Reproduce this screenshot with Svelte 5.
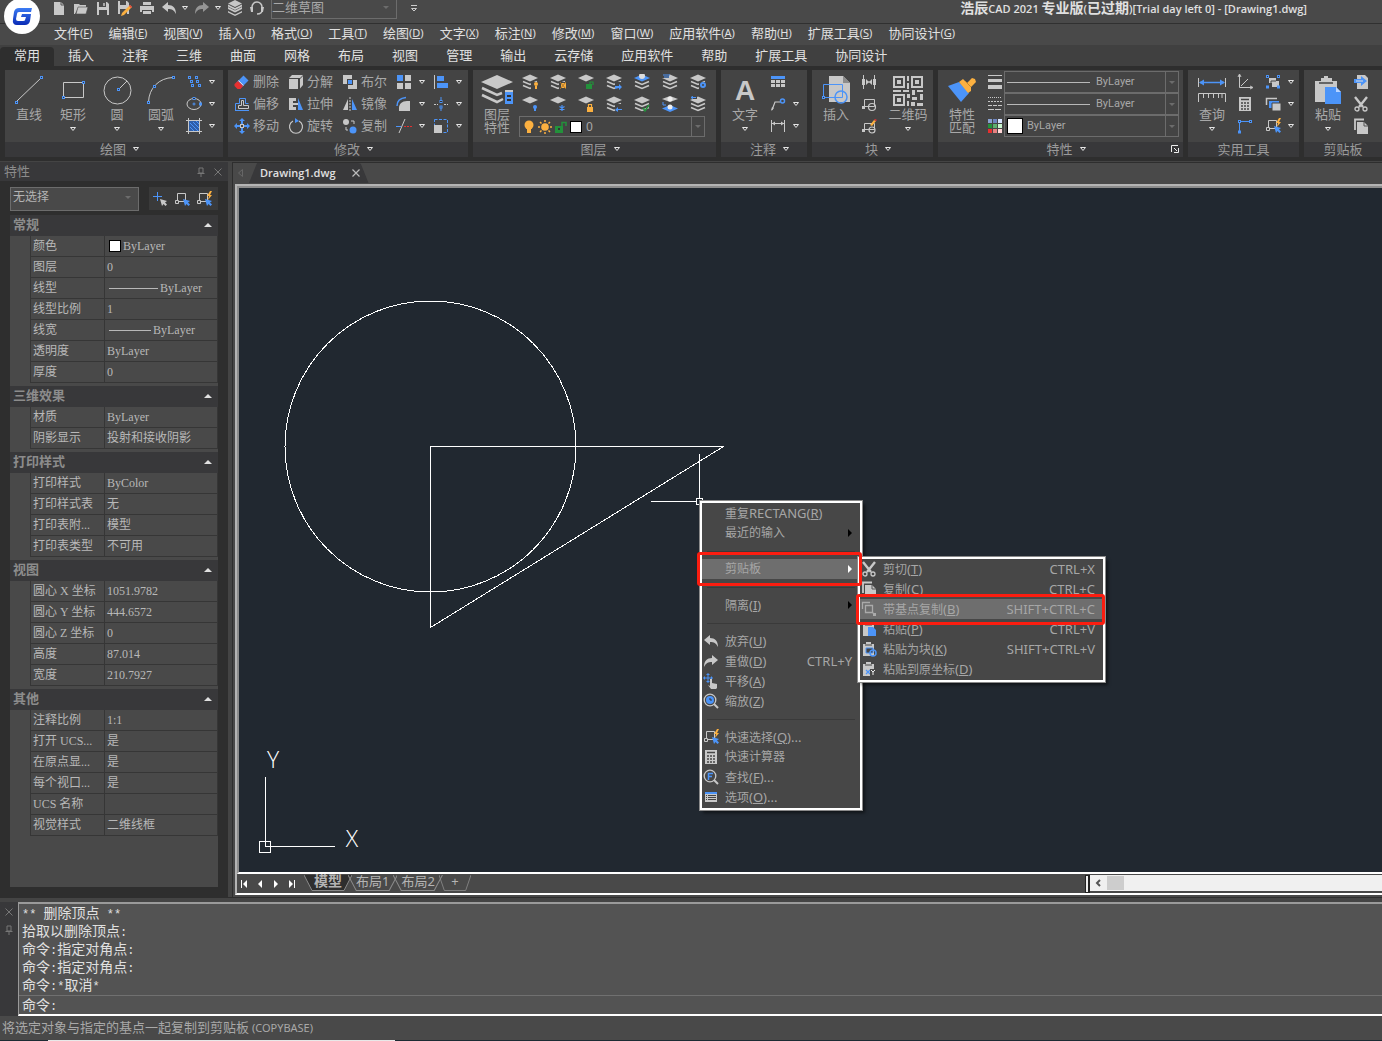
<script lang="ts">
  type Value = { label: string; value: string; swatch?: boolean; line?: number }

  const G = '#c8c8c8'
  const B = '#4c94f8'
  const O = '#fbb040'

  // square grip used on most of the drawing icons
  const grip = (x: number, y: number) =>
    `<rect x="${x - 1}" y="${y - 1}" width="2" height="2" fill="#333" stroke="${B}"/>`

  const layers = (badge = '', top = G) =>
    `<path d="M8 .5l8 3.5-8 3.5L0 4z" fill="${top}"/><path d="M1 7.5l7 3 7-3M1 11.5l7 3 7-3" fill="none" stroke="${G}" stroke-width="1.6"/>${badge}`
  const layerTop = (badge: string) => `<path d="M8 .5l8 3.5-8 3.5L0 4z" fill="${G}"/>${badge}`
  const clear = '<rect x="9" y="8" width="7" height="8" fill="#444"/>'
  const cursor = (x: number, y: number, c: string) =>
    `<path d="M${x} ${y}l7 2-2 1.500 2 2-1.500 1.500-2-2-1.500 2z" fill="${c}"/>`
  const board = `<path d="M2 3h3V1h5v2h3v12H2z" fill="${G}"/><path d="M4 4h7" stroke="#444"/>`

  const icons: Record<string, string> = {
    new: `<path d="M3 2h7l3 3v10H3z" fill="${G}"/><path d="M10 2v3h3" fill="none" stroke="#555"/>`,
    open: `<path d="M1 4h5l1 1h6v3H5l-3 6H1z" fill="${G}"/><path d="M5 7h10l-2 7H3z" fill="${G}" stroke="#494949" stroke-width=".6"/>`,
    save: `<path d="M2 2h10l2 2v11H2z" fill="${G}"/><path d="M4 2v5h7V2M4 15v-5h8v5z" fill="#494949"/><path d="M9 3v3" stroke="${G}" stroke-width="1.500"/>`,
    saveas: `<path d="M1 1h9l2 2v11H1z" fill="${G}"/><path d="M3 1v4h6V1M3 14V9h7v5z" fill="#494949"/><path d="M13 5l2 2-8 8-3 1 1-3z" fill="${O}"/><path d="M13 5l2 2-1 1-2-2z" fill="#e64040"/>`,
    print: `<path d="M4 2h8v3H4zM1 6h14v6h-2v-2H3v2H1zM4 11h8v3H4z" fill="${G}"/>`,
    undo: `<path d="M1 7l6-5v3c5 0 8 3 8 9-2-4-4-5-8-5v3z" fill="${G}"/>`,
    redo: `<path d="M15 7L9 2v3c-5 0-8 3-8 9 2-4 4-5 8-5v3z" fill="${G}"/>`,
    stack: `<path d="M8 0l7 3.500-7 3.500-7-3.500zM1 7l7 3.500L15 7v2l-7 3.500L1 9zM1 11l7 3.500 7-3.500v1.500L8 16l-7-3.500z" fill="${G}"/><path d="M1 4.500v2l7 3.500 7-3.500v-2L8 8z" fill="${G}"/>`,
    headset: `<path d="M3 10V7a5 5 0 0 1 10 0v3c0 3-2 4-5 4" fill="none" stroke="${G}" stroke-width="1.500"/><path d="M1 7h3v5H2zM12 7h3l-1 5h-2z" fill="${G}"/>`,
    line: `<path d="M4 27L28 4" stroke="${G}"/>${grip(3.5, 28.5)}${grip(28.5, 3.5)}`,
    rect: `<path d="M6.500 8.500h20v15h-20z" fill="none" stroke="${G}"/>${grip(26.5, 8.5)}${grip(6.5, 23.5)}`,
    circle: `<circle cx="16.500" cy="16.500" r="13.500" fill="none" stroke="${G}"/><path d="M18 15l8-8" stroke="${G}"/>${grip(17.5, 15.5)}`,
    arc: `<path d="M3.500 28C4 14 14 4 28 3.500" fill="none" stroke="${G}"/>${grip(3.5, 28.5)}${grip(9.5, 12.5)}${grip(28.5, 3.5)}`,
    points: [[3.5, 3.5], [10.5, 3.5], [5.5, 7.5], [11.5, 7.5], [6.5, 11.5], [13.5, 11.5]]
      .map(([x, y]) => `<rect x="${x - 1}" y="${y - 1}" width="2" height="2" fill="none" stroke="${B}"/>`).join(''),
    ellipse: `<ellipse cx="8" cy="8" rx="7" ry="5.500" fill="none" stroke="${G}"/><path d="M8 6.500v3M6.500 8h3" stroke="${B}"/>${grip(8, 2.5)}${grip(14.5, 8)}`,
    hatch: `<rect x="3" y="3" width="10" height="10" fill="#2f5ea8"/><path d="M4 9l4 4M4 5l8 8M7 4l6 6M10 3l3 3" stroke="${B}"/><path d="M2.500 0v16M13.500 0v16M0 2.500h16M0 13.500h16" stroke="${G}"/>`,
    erase: `<path d="M9.500 1.500l5 5-7 7-5-5z" fill="${B}"/><path d="M4 7l5 5-2.500 3h-3L.5 12v-2z" fill="#e63030"/><path d="M4.500 6.500l5 5" stroke="#ddd"/>`,
    explode: `<path d="M1 5h9v10H1zM1 4l3-3h11l-3 3zM12 5l3-3v9l-3 3.500z" fill="${G}"/>`,
    bool: `<path d="M1 1h9v9H1zM6 6h9v9H6z" fill="${G}"/><rect x="5" y="5" width="6" height="6" fill="#444"/><rect x="6" y="6" width="4" height="4" fill="${B}"/>`,
    array: `<path d="M9 1h6v6H9zM1 9h6v6H1zM9 9h6v6H9z" fill="${G}"/><path d="M1 1h6v6H1z" fill="${B}"/>`,
    align: `<path d="M1.500 1v14" stroke="${G}"/><path d="M4 2h7v5H4zM4 9h11v5H4z" fill="${B}"/>`,
    offset: `<path d="M1.500 14.500v-7h4v-5h6v5h3" fill="none" stroke="${B}"/><path d="M1 14.500h14" stroke="${B}"/><path d="M4.500 12.500v-3h3v-5h2v5h5v3z" fill="none" stroke="${G}"/>`,
    stretch: `<path d="M1 2h7v3H5v6h3v3H1z" fill="${G}"/><path d="M10 2l5 12h-5z" fill="${B}"/><path d="M5 8h5" stroke="${G}" stroke-width="2"/>`,
    mirror: `<path d="M6 3v11H1z" fill="${G}"/><path d="M10 3v11h5z" fill="${B}"/><path d="M8 1v15" stroke="${G}" stroke-dasharray="2 1"/>`,
    fillet: `<path d="M3 15V12c0-4 3-7 8-7h3v10z" fill="${G}"/><path d="M1 10c0-5 3-8 9-8.500" fill="none" stroke="${B}" stroke-width="1.500"/>`,
    break: `<path d="M8 1v4M8 11v4" stroke="${B}"/><path d="M1 8.500h4M11 8.500h4" stroke="${G}" stroke-dasharray="2 1"/>${grip(8, 5.5)}${grip(8, 11)}`,
    move: `<path d="M8 0l3 3H9v4h4V5l3 3-3 3V9H9v4h2l-3 3-3-3h2V9H3v2L0 8l3-3v2h4V3H5z" fill="${B}"/><rect x="6.500" y="6.500" width="3" height="3" fill="#444" stroke="${G}"/>`,
    rotate: `<path d="M5 3a6.500 6.500 0 1 0 6 0" fill="none" stroke="${G}" stroke-width="1.200"/><path d="M7 0l4 3-4 2z" fill="${B}"/>`,
    copy: `<circle cx="4" cy="4" r="3" fill="${G}"/><circle cx="11" cy="12" r="3.500" fill="${B}"/><path d="M9 3h3v3M4 9v3h2" fill="none" stroke="${G}"/>`,
    trim: `<path d="M3 15L9 1" stroke="${G}"/><path d="M0 8.500h5" stroke="${B}"/><path d="M8 8.500h8" stroke="#e63030" stroke-dasharray="2 1"/>`,
    scale: `<path d="M1.500 1.500h13v13h-13z" fill="none" stroke="${B}" stroke-dasharray="3 1.500"/><rect x="1" y="7" width="8" height="8" fill="${G}"/>`,
    layerprops: `<path d="M16 1l16 7-16 7L0 8z" fill="${G}"/><path d="M1 14l15 7 5-2M1 21l15 7 6-3" fill="none" stroke="${G}" stroke-width="2.500"/><path d="M24 17h8v13h-8z" fill="${B}"/><path d="M24 17h8" stroke="${G}" stroke-width="2"/><path d="M26 21h4v2h-4zM26 25h4v2h-4z" fill="#333"/>`,
    layoff: layers(`${clear}<circle cx="14" cy="10" r="2" fill="${O}"/><path d="M13 12h2v3h-2z" fill="${O}"/>`),
    layfreeze: layers(`${clear}<rect x="11" y="9" width="5" height="5" fill="${O}"/><path d="M10 8l6 7M16 8l-6 7" stroke="#a9752c"/>`),
    layunlock: layerTop(`<path d="M8 10h6v5H8z" fill="#23913b"/><path d="M12 10V8h3v3" fill="none" stroke="#23913b" stroke-width="1.200"/>`),
    laynext: layers(`${clear}<path d="M9 15v-3h4v-2l3 3-3 3v-2" fill="${B}"/>`),
    laycur: layers('<circle cx="8" cy="2" r="3" fill="#ddd"/>', B),
    laymatch: layers(`<path d="M0 0h7v4H0z" fill="#444"/><path d="M1 1h7M2 3h5" stroke="${B}"/>`),
    layset: layers(`${clear}<circle cx="13" cy="11" r="2" fill="#444" stroke="${B}" stroke-width="2"/>`),
    layon: layerTop(`<circle cx="13" cy="11" r="2" fill="${B}"/><path d="M12 12h2v3h-2z" fill="${B}"/>`),
    laythaw: layerTop(`<path d="M12 9v6M9.500 10.500l5 3M14.500 10.500l-5 3" stroke="${B}" stroke-width="1.200"/>`),
    laylock: layerTop(`<path d="M9 11h6v5H9z" fill="${O}"/><path d="M10.500 11V8.500h3V11" fill="none" stroke="${O}" stroke-width="1.200"/>`),
    layprev: layers(`${clear}<path d="M16 10v3h-4v-2l-3 3 3 2v-2h4" fill="${B}"/>`),
    laycheck: layers('<path d="M9 12l2 3 4-6" fill="none" stroke="#23913b" stroke-width="1.500"/>'),
    laywalk: `<path d="M8 0l8 3-8 3-8-3z" fill="${G}"/><path d="M8 9l8 3.500-8 3.500-8-3.500z" fill="${B}"/><circle cx="8" cy="3" r="2.500" fill="#eee"/><circle cx="8" cy="11" r="2.500" fill="#eee"/><path d="M1 6v3h3" stroke="${B}" fill="none"/>`,
    layback: layers(`<rect width="7" height="3" fill="#444"/><path d="M6 1.500H1M3 0L1 1.500 3 3" fill="none" stroke="${B}"/>`),
    bulb: `<circle cx="8" cy="6" r="4.500" fill="${O}"/><path d="M6 10h4v4H6z" fill="${O}"/>`,
    sun: `<circle cx="8" cy="8" r="3.800" fill="${O}"/><path d="M8 1v2M8 13v2M1 8h2M13 8h2M3 3l1.500 1.500M11.500 11.500L13 13M13 3l-1.500 1.500M4.500 11.500L3 13" stroke="${O}" stroke-width="1.500"/>`,
    unlock: `<path d="M2 7h8v7H2z" fill="#23913b"/><path d="M9 7V3.500h4V7" fill="none" stroke="#23913b" stroke-width="1.500"/><path d="M5 10h2" stroke="#333" stroke-width="2"/>`,
    text: `<text x="16" y="26" text-anchor="middle" font-family="Liberation Sans" font-weight="bold" font-size="28" fill="${G}">A</text>`,
    table: `<path d="M1 2h14v3H1z" fill="${B}"/><path d="M1 6h4v3H1zM6 6h4v3H6zM11 6h4v3h-4zM1 10h4v3H1zM6 10h4v3H6zM11 10h4v3h-4z" fill="${G}"/>`,
    leader: `<path d="M2 14l3-8h5" fill="none" stroke="${G}" stroke-width="1.200"/><path d="M1 15l1-4 2 1z" fill="${G}"/><circle cx="12.500" cy="5" r="2" fill="none" stroke="${B}" stroke-width="1.500"/>`,
    dim: `<path d="M1.500 2v12M14.500 2v12M2 5.500h12" stroke="${G}"/><path d="M2 5.500l3-2v4zM14 5.500l-3-2v4z" fill="${G}"/>`,
    insert: `<path d="M9 2h14l7 7v19H9z" fill="${G}"/><path d="M23 2v7h7" fill="#8c8c8c"/><path d="M3.500 10.500h19v13h-19z" fill="none" stroke="${B}"/><circle cx="21" cy="23" r="6" fill="none" stroke="${B}" stroke-width="1.500"/>${grip(3.5, 23.5)}`,
    editblk: `<path d="M2.500 1v14M13.500 1v14M5 8h6" stroke="${G}"/><path d="M1 5h3v6H1zM12 5h3v6h-3zM5 5l3 3-3 3zM11 5L8 8l3 3z" fill="${G}"/>`,
    block: `<path d="M3.500 3.500h10v7h-10z" fill="none" stroke="${G}"/><circle cx="11" cy="11" r="3.500" fill="none" stroke="${G}" stroke-width="1.200"/><path d="M1 10h3v3H1z" fill="${G}"/>`,
    blockedit: `<path d="M3.500 5.500h10v6h-10z" fill="none" stroke="${G}"/><circle cx="11" cy="12" r="3" fill="none" stroke="${G}" stroke-width="1.200"/><path d="M1 11h3v3H1z" fill="${G}"/><path d="M9 7l4-5 2 1-4 5z" fill="${O}"/><path d="M13 2l1-1 2 1-1 1z" fill="#e63030"/>`,
    qr: `<path d="M2 3h10v10H2zM20 3h10v10H20zM2 21h10v10H2z" fill="none" stroke="${G}" stroke-width="2"/><path d="M5 6h4v4H5zM23 6h4v4h-4zM5 24h4v4H5zM15 2h2v5h-2zM15 9h2v6h-2zM1 16h8v2H1zM11 16h6v2h-6zM20 16h3v5h-3zM25 16h6v2h-6zM15 20h3v4h-3zM15 27h2v5h-2zM20 23h5v3h-5zM19 28h4v4h-4zM25 29h6v3h-6zM28 20h3v6h-3z" fill="${G}"/>`,
    match: `<path d="M2 12l11-4 10 11-8 9z" fill="${B}"/><path d="M13 8l4-3 4 4 5-5 3 1 1 3-5 5v4l-3 2z" fill="${O}"/><path d="M19 7l6 6" stroke="#c98828"/>`,
    lweight: `<path d="M1 1.500h14" stroke="${G}"/><path d="M1 6.500h14" stroke="${G}" stroke-width="3"/><path d="M1 13h14" stroke="${G}" stroke-width="4"/>`,
    ltype: `<path d="M1 1.500h14" stroke="${G}" stroke-dasharray="1 1"/><path d="M1 5.500h14" stroke="${G}" stroke-dasharray="2 1"/><path d="M1 9.500h14" stroke="${G}" stroke-dasharray="4 1"/><path d="M1 13.500h14" stroke="${G}" stroke-dasharray="6 1"/>`,
    colors: `<path d="M1 1h4v4H1z" fill="#8aa2d2"/><path d="M6 1h4v4H6z" fill="#6d83bd"/><path d="M11 1h4v4h-4z" fill="#d6e2ff"/><path d="M1 6h4v4H1z" fill="#23913b"/><path d="M6 6h4v4H6z" fill="#5fae6d"/><path d="M11 6h4v4h-4z" fill="#c8f5ce"/><path d="M1 11h4v4H1z" fill="#e63030"/><path d="M6 11h4v4H6z" fill="#e68080"/><path d="M11 11h4v4h-4z" fill="#ffd6d6"/>`,
    measure: `<path d="M2.500 4v9M29.500 4v9" stroke="${G}"/><path d="M4 8.500h24" stroke="${B}" stroke-width="1.500"/><path d="M3 8.500l5-3v6zM29 8.500l-5-3v6z" fill="${B}"/><path d="M2.500 28v-8.500h27V28M7.500 20v4M12.500 20v4M17.500 20v4M22.500 20v4M26 20v4" fill="none" stroke="${G}"/>`,
    ucs: `<path d="M2.500 1v12.500H15M4 12l7-7" fill="none" stroke="${G}"/><path d="M1 3l1.500-3L4 3M13 12l3 1.500-3 1.500" fill="none" stroke="${G}"/>`,
    calc: `<path d="M2 1h12v14H2z" fill="${G}"/><path d="M4 3.500h8M4 7h2M7 7h2M10 7h2M4 10h2M7 10h2M10 10h2M4 13h2M7 13h2M10 13h2" stroke="#444" stroke-width="1.600"/>`,
    ortho: `<path d="M2.500 14V3.500H14" fill="none" stroke="${B}"/>${grip(2.5, 3.5)}${grip(13.5, 3.5)}${grip(2.5, 14)}`,
    group: `<path d="M4 4h7v5H4zM7 7h7v6H7z" fill="${G}"/><path d="M6 9V7h5" stroke="#444" fill="none"/>${grip(2.5, 2.5)}${grip(13.5, 2.5)}${grip(2.5, 13)}${grip(13.5, 13)}`,
    order: `<path d="M1.500 9V2.500H12" fill="none" stroke="${G}" stroke-width="1.500"/><path d="M4 5h10v7H4z" fill="${B}"/><path d="M7 7h9v8H7z" fill="${G}" stroke="#444"/>`,
    qselect: `<path d="M3.500 2.500h8v8h-8z" fill="none" stroke="${G}"/><path d="M1.500 9.500h3v3h-3z" fill="#444" stroke="${G}"/><path d="M14 0l-3 5h2l-1 4 4-5h-2l2-4z" fill="${O}"/>${cursor(9, 8, B)}`,
    select: `<path d="M3.500 2.500h8v8h-8z" fill="none" stroke="${G}"/><path d="M1.500 9.500h3v3h-3z" fill="#444" stroke="${G}"/>${cursor(9, 8, B)}`,
    pick: `<path d="M5.500 1v9M1 5.500h9" stroke="${B}"/>${cursor(8, 8, G)}`,
    paste: `<path d="M3 7h6V4h3V2h4v2h4v3h5v21H3z" fill="${G}"/><path d="M7 9h14" stroke="#444" stroke-width="1.500"/><path d="M13 13h11l5 5v12H13z" fill="${B}"/><path d="M24 13v5h5" fill="#b9d4ff"/>`,
    export: `<path d="M4 1h8l3 3v11H4z" fill="${G}"/><path d="M1 5h7V2l6 5-6 5V9H1z" fill="${B}"/><path d="M3 7h7" stroke="#ddd"/>`,
    cut: `<path d="M2 1l8 10M14 1L6 11" stroke="${G}" stroke-width="2.400"/><circle cx="4" cy="13" r="2" fill="none" stroke="${G}" stroke-width="1.300"/><circle cx="12" cy="13" r="2" fill="none" stroke="${G}" stroke-width="1.300"/>`,
    copydoc: `<path d="M2 12V1.500h9" fill="none" stroke="${G}" stroke-width="1.800"/><path d="M4 4h7l4 4v8H4z" fill="${G}"/><path d="M11 4v4h4" fill="none" stroke="#555"/>`,
    copybase: `<path d="M1.500 8V1.500H9M4.500 4.500h7v7h-7zM11 11l3 3" fill="none" stroke="#aaa" stroke-width="1.300"/><path d="M12 12h3v3h-3z" fill="#aaa"/>`,
    pastes: `${board}<path d="M7 6h5l3 3v6H7z" fill="${B}"/>`,
    pasteblk: `${board}<path d="M5 7h7v5H5z" fill="#444" stroke="${B}"/><circle cx="12" cy="12" r="3" fill="none" stroke="${B}" stroke-width="1.500"/>`,
    pasteorig: `${board}<path d="M5 9l4 4M9 9l-4 4" stroke="${B}" stroke-width="1.300"/><path d="M9 8h7v7H9z" fill="#474747"/><path d="M10 9l2 2 2-2M12 11v3" stroke="#eee" fill="none"/>`,
    pan: `<path d="M5 0l2 2H3zM5 10L3 8h4zM0 5l2-2v4zM10 5L8 3v4z" fill="${B}"/><path d="M5 1v8M1 5h8" stroke="${B}"/><path d="M7 6h2v4l5 1v4l-1 1H8l-3-4 2 1z" fill="${G}"/>`,
    zoom: `<circle cx="7" cy="7" r="5.800" fill="none" stroke="${G}" stroke-width="1.300"/><circle cx="7" cy="7" r="4" fill="${B}"/><path d="M7 5v2h2" fill="none" stroke="#333"/><path d="M11 11l4 4" stroke="${G}" stroke-width="2"/>`,
    find: `<circle cx="7" cy="7" r="5.800" fill="none" stroke="${G}" stroke-width="1.300"/><path d="M5.500 11V4.500H10M5.500 7.500H9" fill="none" stroke="${B}" stroke-width="1.500"/><path d="M11 11l4 4" stroke="${G}" stroke-width="2"/>`,
    options: `<path d="M2 3h12v10H2z" fill="${G}"/><path d="M2 4h12" stroke="${B}" stroke-width="2"/><path d="M3 6.500h1M5 6.500h8M3 8.500h1M5 8.500h8M3 10.500h1M5 10.500h8" stroke="#444"/>`
  }

  const menus = [
    ['文件', 'F'], ['编辑', 'E'], ['视图', 'V'], ['插入', 'I'], ['格式', 'O'], ['工具', 'T'], ['绘图', 'D'], ['文字', 'X'],
    ['标注', 'N'], ['修改', 'M'], ['窗口', 'W'], ['应用软件', 'A'], ['帮助', 'H'], ['扩展工具', 'S'], ['协同设计', 'G']
  ]

  const tabs = ['常用', '插入', '注释', '三维', '曲面', '网格', '布局', '视图', '管理', '输出', '云存储', '应用软件', '帮助', '扩展工具', '协同设计']

  const layerTools = [
    ['layoff', 'layfreeze', 'layunlock', 'laynext', 'laycur', 'laymatch', 'layset'],
    ['layon', 'laythaw', 'laylock', 'layprev', 'laycheck', 'laywalk', 'layback']
  ]

  const sections: { title: string; rows: Value[] }[] = [
    {
      title: '常规',
      rows: [
        { label: '颜色', value: 'ByLayer', swatch: true },
        { label: '图层', value: '0' },
        { label: '线型', value: 'ByLayer', line: 49 },
        { label: '线型比例', value: '1' },
        { label: '线宽', value: 'ByLayer', line: 42 },
        { label: '透明度', value: 'ByLayer' },
        { label: '厚度', value: '0' }
      ]
    },
    {
      title: '三维效果',
      rows: [
        { label: '材质', value: 'ByLayer' },
        { label: '阴影显示', value: '投射和接收阴影' }
      ]
    },
    {
      title: '打印样式',
      rows: [
        { label: '打印样式', value: 'ByColor' },
        { label: '打印样式表', value: '无' },
        { label: '打印表附...', value: '模型' },
        { label: '打印表类型', value: '不可用' }
      ]
    },
    {
      title: '视图',
      rows: [
        { label: '圆心 X 坐标', value: '1051.9782' },
        { label: '圆心 Y 坐标', value: '444.6572' },
        { label: '圆心 Z 坐标', value: '0' },
        { label: '高度', value: '87.014' },
        { label: '宽度', value: '210.7927' }
      ]
    },
    {
      title: '其他',
      rows: [
        { label: '注释比例', value: '1:1' },
        { label: '打开 UCS...', value: '是' },
        { label: '在原点显...', value: '是' },
        { label: '每个视口...', value: '是' },
        { label: 'UCS 名称', value: '' },
        { label: '视觉样式', value: '二维线框' }
      ]
    }
  ]

  type Item = { text?: string; key?: string; tail?: string; icon?: string; shortcut?: string; sub?: boolean; active?: boolean; sep?: boolean }

  const contextMenu: Item[] = [
    { text: '重复RECTANG', key: 'R' },
    { text: '最近的输入', sub: true },
    { sep: true },
    { text: '剪贴板', sub: true, active: true },
    { sep: true },
    { text: '隔离', key: 'I', sub: true },
    { sep: true },
    { text: '放弃', key: 'U', icon: 'undo' },
    { text: '重做', key: 'D', icon: 'redo', shortcut: 'CTRL+Y' },
    { text: '平移', key: 'A', icon: 'pan' },
    { text: '缩放', key: 'Z', icon: 'zoom' },
    { sep: true },
    { text: '快速选择', key: 'Q', tail: '...', icon: 'qselect' },
    { text: '快速计算器', icon: 'calc' },
    { text: '查找', key: 'F', tail: '...', icon: 'find' },
    { text: '选项', key: 'O', tail: '...', icon: 'options' }
  ]

  const clipboardMenu: Item[] = [
    { text: '剪切', key: 'T', icon: 'cut', shortcut: 'CTRL+X' },
    { text: '复制', key: 'C', icon: 'copydoc', shortcut: 'CTRL+C' },
    { text: '带基点复制', key: 'B', icon: 'copybase', shortcut: 'SHIFT+CTRL+C', active: true },
    { text: '粘贴', key: 'P', icon: 'pastes', shortcut: 'CTRL+V' },
    { text: '粘贴为块', key: 'K', icon: 'pasteblk', shortcut: 'SHIFT+CTRL+V' },
    { text: '粘贴到原坐标', key: 'D', icon: 'pasteorig' }
  ]

  const history = ['** 删除顶点 **', '拾取以删除顶点:', '命令:指定对角点:', '命令:指定对角点:', '命令:*取消*']

  // split into CJK and latin runs, the two are set in different sizes
  const runs = (text: string) => text.split(/([\x20-\x7e]+)/).filter(Boolean)
  const isLatin = (run: string) => run.charCodeAt(0) < 127

  let activeTab = $state('常用')
  let command = $state('')
</script>

{#snippet icon(name: string, size = 16)}
  <svg class={size > 16 ? 'icon-lg' : 'icon'} viewBox="0 0 {size} {size}" aria-hidden="true">{@html icons[name]}</svg>
{/snippet}

{#snippet chev()}
  <svg class="chev" viewBox="0 0 8 6" aria-hidden="true"><path d="M1.500 1.500h5L4 4.500z" fill="none" stroke="#e6e6e6" /></svg>
{/snippet}

{#snippet mixed(text: string)}
  {#each runs(text) as run}<span class:latin={isLatin(run)}>{run}</span>{/each}
{/snippet}

{#snippet big(name: string, label: string, drop = false)}
  <button class="big">
    {@render icon(name, 32)}
    <span>{label}</span>
    {#if drop}{@render chev()}{/if}
  </button>
{/snippet}

{#snippet small(name: string, label = '', drop = false)}
  <button class="small" aria-label={label || name}>
    {@render icon(name)}
    {#if label}<span>{label}</span>{/if}
    {#if drop}{@render chev()}{/if}
  </button>
{/snippet}

{#snippet menuItems(items: Item[])}
  {#each items as item}
    {#if item.sep}
      <li class="sep" role="separator"></li>
    {:else}
      <li role="none">
        <button class="item" class:active={item.active} role="menuitem">
          <span class="item-icon">{#if item.icon}{@render icon(item.icon)}{/if}</span>
          <span class="item-text">{@render mixed(item.text ?? '')}{#if item.key}<span class="latin">(<u>{item.key}</u>){item.tail ?? ''}</span>{/if}</span>
          {#if item.shortcut}<span class="latin">{item.shortcut}</span>{/if}
          {#if item.sub}<svg class="arrow" viewBox="0 0 4 8" aria-hidden="true"><path d="M0 0l4 4-4 4z" fill="currentColor" /></svg>{/if}
        </button>
      </li>
    {/if}
  {/each}
{/snippet}

<div class="app">
  <header class="titlebar">
    <svg class="logo" viewBox="0 0 36 36" aria-label="浩辰CAD">
      <defs>
        <linearGradient id="g" x1="0" y1="0" x2="0" y2="1"><stop offset="0" stop-color="#3c7cf4" /><stop offset="1" stop-color="#0a2bb5" /></linearGradient>
      </defs>
      <circle cx="18" cy="18" r="18" fill="#fff" />
      <path d="M28 10H15q-4 0-5 4l-1 7q-1 6 4 6h8q4 0 5-4l1-7h-9l-1 3h5l-1 3q0 1-2 1h-5q-2 0-2-2l1-5q0-2 2-2h12z" fill="url(#g)" />
    </svg>
    <div class="quick">
      {#each ['new', 'open', 'save', 'saveas', 'print', 'undo'] as name}
        <button aria-label={name}>{@render icon(name)}</button>
      {/each}
      {@render chev()}
      <button class="dim" aria-label="redo">{@render icon('redo')}</button>
      {@render chev()}
      <button aria-label="stack">{@render icon('stack')}</button>
      <button aria-label="headset">{@render icon('headset')}</button>
    </div>
    <div class="combo workspace-combo">
      <select aria-label="工作空间"><option>二维草图</option></select>
      <i class="tri"></i>
    </div>
    <button class="more" aria-label="more"><svg viewBox="0 0 8 8"><path d="M1 1.500h6M1.500 4.500h5L4 7z" fill="none" stroke="#ccc" /></svg></button>
    <h1>{@render mixed('浩辰CAD 2021 专业版(已过期)[Trial day left 0] - [Drawing1.dwg]')}</h1>
  </header>

  <nav class="menubar">
    {#each menus as [name, key]}
      <button>{name}<span class="latin">(<u>{key}</u>)</span></button>
    {/each}
  </nav>

  <nav class="tabs">
    {#each tabs as tab}
      <button class:active={tab === activeTab} onclick={() => (activeTab = tab)}>{tab}</button>
    {/each}
  </nav>

  <div class="ribbon">
    <section>
      <div class="tools">
        {@render big('line', '直线')}
        {@render big('rect', '矩形', true)}
        {@render big('circle', '圆', true)}
        {@render big('arc', '圆弧', true)}
        <div class="rows">
          {@render small('points', '', true)}
          {@render small('ellipse', '', true)}
          {@render small('hatch', '', true)}
        </div>
      </div>
      <footer class="expandable">绘图 {@render chev()}</footer>
    </section>

    <section>
      <div class="tools modify">
        {@render small('erase', '删除')}
        {@render small('explode', '分解')}
        {@render small('bool', '布尔')}
        {@render small('array', '', true)}
        {@render small('align', '', true)}
        {@render small('offset', '偏移')}
        {@render small('stretch', '拉伸')}
        {@render small('mirror', '镜像')}
        {@render small('fillet', '', true)}
        {@render small('break', '', true)}
        {@render small('move', '移动')}
        {@render small('rotate', '旋转')}
        {@render small('copy', '复制')}
        {@render small('trim', '', true)}
        {@render small('scale', '', true)}
      </div>
      <footer class="expandable">修改 {@render chev()}</footer>
    </section>

    <section>
      <div class="tools">
        {@render big('layerprops', '图层\n特性')}
        <div class="rows">
          {#each layerTools as row}
            <div class="layer-row">
              {#each row as name}{@render small(name)}{/each}
            </div>
          {/each}
          <div class="combo layer-combo">
            {@render icon('bulb')}{@render icon('sun')}{@render icon('unlock')}<i class="swatch"></i>
            <select aria-label="图层"><option>0</option></select>
            <span class="drop"><i class="tri"></i></span>
          </div>
        </div>
      </div>
      <footer class="expandable">图层 {@render chev()}</footer>
    </section>

    <section>
      <div class="tools">
        {@render big('text', '文字', true)}
        <div class="rows">
          {@render small('table')}
          {@render small('leader', '', true)}
          {@render small('dim', '', true)}
        </div>
      </div>
      <footer class="expandable">注释 {@render chev()}</footer>
    </section>

    <section>
      <div class="tools">
        {@render big('insert', '插入')}
        <div class="rows narrow">
          {@render small('editblk')}
          {@render small('block')}
          {@render small('blockedit')}
        </div>
        {@render big('qr', '二维码', true)}
      </div>
      <footer class="expandable">块 {@render chev()}</footer>
    </section>

    <section>
      <div class="tools">
        {@render big('match', '特性\n匹配')}
        <div class="rows">
          {@render small('lweight')}
          {@render small('ltype')}
          {@render small('colors')}
        </div>
        <div class="rows bylayer">
          <div class="combo">
            <i class="rule"></i>
            <select aria-label="线宽"><option>ByLayer</option></select>
            <span class="drop"><i class="tri"></i></span>
          </div>
          <div class="combo">
            <i class="rule"></i>
            <select aria-label="线型"><option>ByLayer</option></select>
            <span class="drop"><i class="tri"></i></span>
          </div>
          <div class="combo">
            <i class="swatch large"></i>
            <select aria-label="颜色"><option>ByLayer</option></select>
            <span class="drop"><i class="tri"></i></span>
          </div>
        </div>
      </div>
      <footer class="expandable">
        特性 {@render chev()}
        <button class="launcher" aria-label="特性设置"><svg viewBox="0 0 8 8"><path d="M7 .5H.5V7M3 3l3 3M7.500 3v4.500H3" fill="none" stroke="#eee" /></svg></button>
      </footer>
    </section>

    <section>
      <div class="tools">
        {@render big('measure', '查询', true)}
        <div class="rows narrow">
          {@render small('ucs')}
          {@render small('calc')}
          {@render small('ortho')}
        </div>
        <div class="rows">
          {@render small('group', '', true)}
          {@render small('order', '', true)}
          {@render small('qselect', '', true)}
        </div>
      </div>
      <footer>实用工具</footer>
    </section>

    <section>
      <div class="tools">
        {@render big('paste', '粘贴', true)}
        <div class="rows">
          {@render small('export')}
          {@render small('cut')}
          {@render small('copydoc')}
        </div>
      </div>
      <footer>剪贴板</footer>
    </section>
  </div>

  <main>
    <aside>
      <header>
        <h2>特性</h2>
        <button aria-label="固定"><svg viewBox="0 0 10 10"><path d="M3 1h4v5H3zM1.500 6.500h7M5 7v3" fill="none" stroke="#777" /></svg></button>
        <button aria-label="关闭"><svg viewBox="0 0 10 10"><path d="M1.500 1.500l7 7M8.500 1.500l-7 7" stroke="#777" /></svg></button>
      </header>
      <div class="selection">
        <div class="combo">
          <select aria-label="选择对象"><option>无选择</option></select>
          <i class="tri"></i>
        </div>
        <div class="selection-tools">
          {#each ['pick', 'select', 'qselect'] as name}
            <button aria-label={name}>{@render icon(name)}</button>
          {/each}
        </div>
      </div>
      <div class="props">
        {#each sections as section}
          <section>
            <h3>{section.title}<i class="up"></i></h3>
            <table>
              <tbody>
                {#each section.rows as row}
                  <tr>
                    <th scope="row">{row.label}</th>
                    <td>
                      <div class="value">
                        {#if row.swatch}<i class="swatch"></i>{/if}
                        {#if row.line}<i class="rule" style="width: {row.line}px"></i>{/if}
                        {row.value}
                      </div>
                    </td>
                  </tr>
                {/each}
              </tbody>
            </table>
          </section>
        {/each}
      </div>
    </aside>

    <div class="document">
      <div class="doc-tabs">
        <svg class="prev" viewBox="0 0 5 8" aria-hidden="true"><path d="M4.500 .5v7L.5 4z" fill="none" stroke="#666" /></svg>
        <div class="doc-tab">
          <span>Drawing1.dwg</span>
          <button aria-label="关闭图纸"><svg viewBox="0 0 10 10"><path d="M1.500 1.500l7 7M8.500 1.500l-7 7" stroke="#bbb" stroke-width="1.200" /></svg></button>
        </div>
      </div>

      <div class="frame">
        <div class="canvas">
          <svg class="drawing" fill="none" stroke="#fff" shape-rendering="crispEdges">
            <circle cx="191.500" cy="258.500" r="145.500" />
            <path d="M191.500 258.500H484.500L191.500 439.500z" />
            <path d="M460.500 266v44M412 313.500h45M457.500 310.500h6v6h-6z" />
            <path d="M26.500 589v69.500H96M20.500 653.500h11v11h-11z" />
            <text x="34" y="580">Y</text>
            <text x="113" y="659">X</text>
          </svg>

          <ul class="menu context" role="menu">
            {@render menuItems(contextMenu)}
          </ul>
          <div class="mark mark-main"></div>
          <ul class="menu submenu" role="menu">
            {@render menuItems(clipboardMenu)}
          </ul>
          <div class="mark mark-sub"></div>
        </div>

        <div class="sheets">
          <div class="sheet-nav">
            <button aria-label="第一个"><svg viewBox="0 0 8 8"><path d="M1 0h1v8H1zM7 0v8L3 4z" fill="#fff" /></svg></button>
            <button aria-label="上一个"><svg viewBox="0 0 8 8"><path d="M6 0v8L2 4z" fill="#fff" /></svg></button>
            <button aria-label="下一个"><svg viewBox="0 0 8 8"><path d="M2 0v8l4-4z" fill="#fff" /></svg></button>
            <button aria-label="最后一个"><svg viewBox="0 0 8 8"><path d="M6 0h1v8H6zM1 0v8l4-4z" fill="#fff" /></svg></button>
          </div>
          {#each ['模型', '布局1', '布局2', '+'] as sheet, i}
            <button class="sheet" class:current={i === 0}>
              <svg viewBox="0 0 48 16" preserveAspectRatio="none" aria-hidden="true"><path d="M0 0l8 15.500h32L48 0" /></svg>
              <span>{sheet}</span>
            </button>
          {/each}
          <div class="splitter"></div>
          <div class="scrollbar">
            <button aria-label="向左滚动"><svg viewBox="0 0 6 8"><path d="M5 1L2 4l3 3" fill="none" stroke="#555" stroke-width="2" /></svg></button>
            <i class="thumb"></i>
          </div>
        </div>
      </div>
    </div>
  </main>

  <div class="command">
    <div class="command-side">
      <button aria-label="关闭命令行"><svg viewBox="0 0 10 10"><path d="M1.500 1.500l7 7M8.500 1.500l-7 7" stroke="#777" /></svg></button>
      <button aria-label="固定命令行"><svg viewBox="0 0 10 10"><path d="M3 1h4v5H3zM1.500 6.500h7M5 7v3" fill="none" stroke="#777" /></svg></button>
    </div>
    <div class="command-body">
      <div class="history">
        {#each history as row}<p>{@render mixed(row)}</p>{/each}
      </div>
      <label class="prompt">
        <span>{@render mixed('命令:')}</span>
        <input type="text" bind:value={command} />
      </label>
    </div>
  </div>

  <footer class="status">{@render mixed('将选定对象与指定的基点一起复制到剪贴板 (COPYBASE)')}</footer>
  <div class="edge"><i></i></div>
</div>

<style>
  :global(body) {
    background: #2e2e2e;
  }

  * {
    box-sizing: border-box;
  }

  .app {
    display: flex;
    flex-direction: column;
    min-height: 100vh;
    background: #444;
    color: #e0e0e0;
    font: 13px/16px 'Noto Sans', 'Noto Sans CJK SC', sans-serif;
    overflow: hidden;
  }

  button {
    display: flex;
    align-items: center;
    margin: 0;
    padding: 0;
    border: 0;
    background: none;
    color: inherit;
    font: inherit;
    white-space: nowrap;
  }

  select {
    appearance: none;
    flex: 1;
    min-width: 0;
    padding: 0;
    border: 0;
    background: none;
    color: inherit;
    font: inherit;
    outline: none;
  }

  svg {
    display: block;
    flex: none;
  }

  .icon {
    width: 16px;
    height: 16px;
  }

  .icon-lg {
    width: 32px;
    height: 32px;
  }

  .chev {
    width: 8px;
    height: 6px;
  }

  .combo {
    display: flex;
    align-items: center;
    border: 1px solid #6c6c6c;
    background: #444;
  }

  .tri {
    border: 3px solid transparent;
    border-top-color: #6c6c6c;
    border-bottom: 0;
  }

  .drop {
    display: flex;
    align-items: center;
    justify-content: center;
    align-self: stretch;
    width: 13px;
    border-left: 1px solid #6c6c6c;
  }

  .swatch {
    flex: none;
    width: 12px;
    height: 12px;
    border: 1px solid #000;
    background: #fff;
  }

  .swatch.large {
    width: 16px;
    height: 16px;
    margin-left: 2px;
  }

  .rule {
    flex: none;
    height: 1px;
    background: #b8b8b8;
  }

  /* title bar */
  .titlebar {
    position: relative;
    display: flex;
    height: 24px;
    padding: 0 75px 0 51px;
    background: #494949;
    border-bottom: 1px solid #303030;
  }

  .logo {
    position: absolute;
    left: 4px;
    top: -2px;
    z-index: 1;
    width: 36px;
    height: 36px;
  }

  .quick {
    display: flex;
    align-items: center;
    height: 16px;
  }

  .quick button {
    width: 22px;
  }

  .quick button:nth-child(6) {
    width: 20px;
  }

  .quick .chev {
    margin-right: 5px;
  }

  .quick .dim {
    width: 20px;
    opacity: 0.6;
  }

  .workspace-combo {
    width: 126px;
    height: 19px;
    padding: 0 7px 4px 0;
    border-top: 0;
    background: #494949;
    color: #a8a8a8;
  }

  .more {
    height: 16px;
    margin-left: 13px;
  }

  .more svg {
    width: 8px;
    height: 8px;
  }

  h1 {
    margin: 0 0 0 auto;
    font-size: 14px;
    font-weight: 700;
    line-height: 16px;
    white-space: nowrap;
  }

  h1 .latin {
    font: 600 11px/16px 'Open Sans', 'Noto Sans', sans-serif;
    white-space: pre;
  }

  .menubar {
    display: flex;
    gap: 16px;
    height: 21px;
    padding: 0 0 4px 54px;
    background: #494949;
  }

  .menubar .latin {
    font-size: 11px;
  }

  .tabs {
    display: flex;
    height: 21px;
    background: #404040;
  }

  .tabs button {
    height: 19px;
    margin-top: 2px;
    padding: 0 14px 3px;
  }

  .tabs .active {
    border-radius: 4px 4px 0 0;
    background: #2e2e2e;
  }

  /* ribbon */
  .ribbon {
    display: grid;
    grid-template-columns: 218px 240px 243px 86px 121px 245px 111px 1fr;
    gap: 5px;
    padding: 4px 0 4px 5px;
    background: #2e2e2e;
    color: #a8a8a8;
  }

  .ribbon section {
    display: flex;
    flex-direction: column;
    min-width: 0;
    background: #444;
  }

  .ribbon footer {
    position: relative;
    display: flex;
    align-items: center;
    justify-content: center;
    gap: 6px;
    height: 15px;
    padding-bottom: 2px;
    background: #38383a;
    color: #9a9a9a;
  }

  .ribbon .expandable {
    padding-left: 12px;
  }

  .launcher {
    position: absolute;
    right: 4px;
  }

  .launcher svg {
    width: 8px;
    height: 8px;
  }

  .tools {
    display: flex;
    height: 72px;
    padding: 1px 0 0 2px;
  }

  .big {
    flex-direction: column;
    width: 44px;
    padding-top: 3px;
    line-height: 13px;
    white-space: pre-line;
  }

  .big .icon-lg {
    margin-bottom: 2px;
  }

  .big .chev {
    margin-top: 5px;
  }

  .small {
    gap: 3px;
    height: 22px;
  }

  .rows .small {
    padding-left: 3px;
    gap: 6px;
  }

  .rows.narrow {
    width: 28px;
  }

  .modify {
    display: grid;
    grid-template-columns: 54px 54px 54px 37px 30px;
    grid-auto-rows: 22px;
    padding-left: 6px;
  }

  .modify span {
    padding-bottom: 2px;
  }

  .modify .chev {
    margin-left: 3px;
  }

  .layer-row {
    display: grid;
    grid-template-columns: repeat(7, 28px);
  }

  .layer-combo {
    width: 186px;
    height: 21px;
    margin-top: 1px;
    padding-left: 1px;
    font-size: 12px;
  }

  .layer-combo .swatch {
    margin: 0 4px 0 1px;
  }

  .bylayer {
    flex: 1;
    padding: 0 4px 0 1px;
  }

  .bylayer .combo {
    height: 22px;
    gap: 4px;
    font: 11px/16px Roboto, sans-serif;
  }

  .bylayer .rule {
    width: 83px;
    margin: 0 2px;
  }

  /* properties palette */
  main {
    display: flex;
    flex: 1;
    padding-top: 1px;
  }

  aside {
    display: flex;
    flex-direction: column;
    width: 228px;
    background: #2e2e2e;
  }

  aside header {
    display: flex;
    align-items: center;
    gap: 7px;
    height: 19px;
    padding: 0 5px 0 4px;
    background: #38383a;
    color: #8c8c8c;
  }

  h2 {
    flex: 1;
    margin: 0;
    padding-bottom: 2px;
    font: inherit;
  }

  aside header svg,
  .doc-tab svg,
  .command-side svg {
    width: 10px;
    height: 10px;
  }

  .selection {
    display: flex;
    justify-content: space-between;
    margin: 6px 10px 4px;
    color: #b4b4b4;
    font-size: 12px;
  }

  .selection .combo {
    width: 129px;
    height: 24px;
    padding: 0 7px 4px 2px;
    background: #494949;
  }

  .selection-tools {
    display: flex;
    align-items: center;
    justify-content: space-around;
    width: 69px;
    height: 23px;
    padding-right: 3px;
    background: #3a3a3a;
  }

  .props {
    flex: 1;
    margin: 0 10px 10px;
    background: #494949;
    color: #b8b8b8;
    font: 12px/14px 'Liberation Serif', 'Noto Sans CJK SC', serif;
  }

  .props section {
    margin-bottom: 3px;
  }

  h3 {
    display: flex;
    align-items: center;
    justify-content: space-between;
    height: 21px;
    margin: 0;
    padding: 0 6px 1px 3px;
    background: #38383a;
    color: #8c8c8c;
    font-size: 13px;
    font-weight: 700;
  }

  .up {
    border: 4px solid transparent;
    border-top: 0;
    border-bottom-color: #e0e0e0;
  }

  table {
    width: calc(100% - 20px);
    margin-left: 20px;
    border-spacing: 0;
    border-left: 1px solid #363636;
    table-layout: fixed;
  }

  th,
  td {
    height: 21px;
    padding: 0 0 0 2px;
    border-bottom: 1px solid #363636;
    border-right: 1px solid #363636;
    font-weight: 400;
    text-align: left;
    white-space: nowrap;
  }

  th {
    width: 74px;
  }

  .value {
    display: flex;
    align-items: center;
    gap: 2px;
  }

  .value .swatch,
  .value .rule {
    margin-left: 2px;
  }

  /* drawing area */
  .document {
    display: flex;
    flex: 1;
    flex-direction: column;
    min-width: 0;
    margin-left: 4px;
    border-left: 1px solid #2e2e2e;
    border-top: 1px solid #2e2e2e;
    background: #494949;
  }

  .doc-tabs {
    display: flex;
    align-items: center;
    height: 20px;
    padding-left: 5px;
  }

  .prev {
    width: 5px;
    height: 8px;
    margin-right: 6px;
  }

  .doc-tab {
    display: flex;
    align-items: center;
    gap: 15px;
    padding: 1px 8px 1px 11px;
    border-radius: 8px 12px 0 0;
    background: #38383a;
    clip-path: polygon(8px 0, calc(100% - 8px) 0, 100% 100%, 0 100%);
    font: 600 11px/18px 'Open Sans', sans-serif;
  }

  .frame {
    display: flex;
    flex: 1;
    flex-direction: column;
    margin: 1px 0 2px 2px;
    border: 1px solid #b4b4b4;
    border-width: 2px 0 2px 2px;
    border-bottom-color: #fff;
  }

  .canvas {
    position: relative;
    flex: 1;
    border: 2px solid #8c8c8c;
    border-right: 0;
    border-bottom-color: #fff;
    background: #212830;
  }

  .drawing {
    width: 100%;
    height: 100%;
    position: absolute;
  }

  .drawing text {
    fill: #fff;
    stroke: none;
    text-anchor: middle;
    font: 300 23px 'Open Sans', sans-serif;
  }

  .menu {
    position: absolute;
    z-index: 2;
    margin: 0;
    padding: 0;
    border: 2px solid #fff;
    outline: 1px solid #8a8a8a;
    background: #474747;
    box-shadow: 3px 3px 3px rgba(0, 0, 0, 0.5);
    color: #a6a6a6;
    font-size: 12px;
    line-height: 20px;
    list-style: none;
  }

  .menu .latin {
    font-size: 13px;
  }

  .context {
    left: 461px;
    top: 313px;
    width: 162px;
    padding-bottom: 1px;
  }

  .submenu {
    left: 619px;
    top: 369px;
    width: 247px;
    padding-bottom: 1px;
  }

  .item {
    width: 100%;
    height: 20px;
    padding-right: 8px;
  }

  .item.active {
    background: #6e6e6e;
  }

  .item-icon {
    width: 23px;
    padding-left: 1px;
  }

  .item-text {
    flex: 1;
    text-align: left;
  }

  .arrow {
    width: 4px;
    height: 8px;
    color: #000;
  }

  .active .arrow {
    color: #fff;
  }

  .sep {
    height: 16px;
    padding: 8px 5px 0;
  }

  .sep::before {
    display: block;
    border-top: 1px solid #3a3a3a;
    content: '';
  }

  .mark {
    position: absolute;
    z-index: 3;
    border: 3px solid #fb1d10;
    border-radius: 3px;
  }

  .mark-main {
    left: 458px;
    top: 364px;
    width: 165px;
    height: 34px;
  }

  .mark-sub {
    left: 617px;
    top: 406px;
    width: 249px;
    height: 31px;
  }

  .sheets {
    display: flex;
    height: 19px;
    padding-top: 1px;
    color: #b4b4b4;
  }

  .sheet-nav {
    display: flex;
    align-items: center;
    gap: 8px;
    padding: 0 8px 0 3px;
  }

  .sheet-nav svg {
    width: 8px;
    height: 8px;
  }

  .sheet {
    display: grid;
    height: 16px;
    margin-right: -4px;
  }

  .sheet svg,
  .sheet span {
    grid-area: 1 / 1;
  }

  .sheet svg {
    width: 0;
    min-width: 100%;
    height: 16px;
    fill: none;
    stroke: #8a8a8a;
  }

  .sheet span {
    align-self: start;
    min-width: 32px;
    padding: 0 8px;
    line-height: 12px;
    text-align: center;
  }

  .current svg {
    fill: #2e2e2e;
  }

  .current span {
    padding: 0 10px;
    font-size: 14px;
    font-weight: 700;
  }

  .splitter {
    width: 5px;
    margin-left: auto;
    border: 1px solid #222;
    border-right-width: 2px;
    background: #eee;
  }

  .scrollbar {
    display: flex;
    flex: 0 0 25.5%;
    align-items: center;
    gap: 6px;
    height: 16px;
    padding-left: 5px;
    background: #f0f0f0;
  }

  .scrollbar svg {
    width: 6px;
    height: 8px;
  }

  .thumb {
    width: 17px;
    height: 14px;
    background: #cdcdcd;
  }

  /* command line */
  .command {
    display: flex;
    padding-top: 4px;
    border-top: 1px solid #2e2e2e;
  }

  .command-side {
    display: flex;
    flex-direction: column;
    gap: 8px;
    width: 18px;
    padding: 5px 4px;
    background: #38383a;
  }

  .command-body {
    flex: 1;
    min-width: 0;
    border: 1px solid #9a9a9a;
    border-width: 2px 0 2px 1px;
    border-bottom-color: #fff;
    background: #535353;
    font-size: 14px;
    line-height: 18px;
  }

  .command-body .latin {
    font: 12px/18px 'Liberation Mono', monospace;
    white-space: pre;
  }

  .history {
    padding: 0 3px 1px;
    border-bottom: 1px solid #707070;
  }

  p {
    height: 18px;
    margin: 0;
  }

  .prompt {
    display: flex;
    height: 18px;
    padding: 0 3px;
  }

  .prompt input {
    flex: 1;
    padding: 0;
    border: 0;
    background: none;
    color: inherit;
    font: inherit;
    outline: none;
  }

  .status {
    height: 24px;
    padding-left: 2px;
    background: #494949;
    color: #a8a8a8;
    line-height: 22px;
  }

  .status .latin {
    font-size: 11px;
    white-space: pre;
  }

  .edge {
    height: 1px;
    padding-left: 48px;
    background: #1d2b33;
  }

  .edge i {
    display: block;
    width: 26%;
    height: 1px;
    background: #e8e8e8;
  }
</style>
